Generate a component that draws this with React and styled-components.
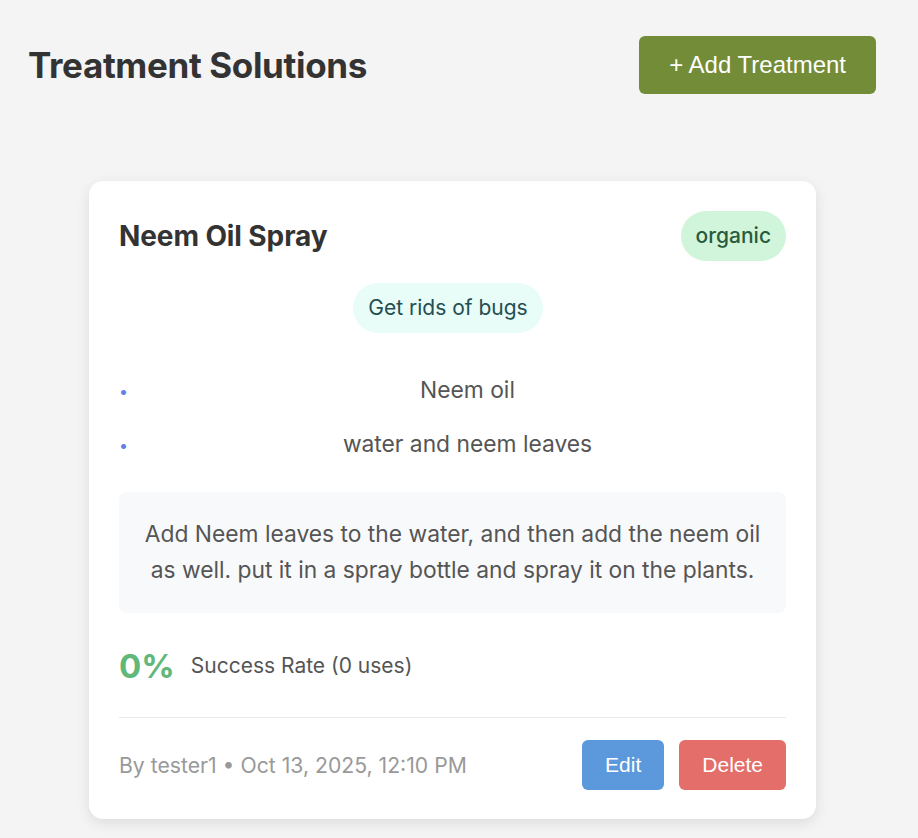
import React from "react";
import styled, { createGlobalStyle } from "styled-components";

const Global = createGlobalStyle`
  html, body { margin: 0; padding: 0; background: #f4f4f4; }
  body { font-family: Inter, "Noto Sans", sans-serif; color: #333; }
  * { box-sizing: border-box; }
`;

const Page = styled.div`
  padding: 36px 42px 40px 28px;
`;

const Header = styled.header`
  display: flex;
  align-items: center;
  justify-content: space-between;
`;

const Title = styled.h1`
  margin: 0;
  font-family: Inter, sans-serif;
  font-weight: 700;
  font-size: 35px;
  color: #333;
  letter-spacing: -0.35px;
`;

const Button = styled.button`
  border: none;
  cursor: pointer;
  font-family: "Liberation Sans", Arial, sans-serif;
  color: #fff;
  border-radius: 6px;
  font-size: ${(p) => p.$size || 21}px;
  padding: ${(p) => p.$pad || "13px 23px"};
  background: ${(p) => p.$bg};
  line-height: 1.15;
`;

const Grid = styled.section`
  display: grid;
  grid-template-columns: 727px;
  margin-top: 87px;
  padding-left: 61px;
`;

const Card = styled.article`
  background: #fff;
  border-radius: 14px;
  box-shadow: 0 4px 14px rgba(0, 0, 0, 0.1);
  padding: 30px 30px 29px;
  text-align: center;
`;

const CardHead = styled.div`
  display: flex;
  align-items: center;
  justify-content: space-between;
`;

const CardTitle = styled.h2`
  margin: 0;
  font-size: 28px;
  font-weight: 700;
  color: #333;
  letter-spacing: -0.1px;
`;

const Pill = styled.span`
  display: inline-block;
  font-size: 21px;
  font-weight: ${(p) => p.$weight || 400};
  padding: 12px 15px;
  border-radius: 999px;
  line-height: 26px;
  background: ${(p) => p.$bg};
  color: ${(p) => p.$color};
`;

const PillRow = styled.div`
  margin-top: 22px;
  padding-right: 9px;
`;

const List = styled.ul`
  list-style: none;
  margin: 30px 0 0;
  padding: 0;
`;

const Item = styled.li`
  position: relative;
  padding: 9px 0 9px 30px;
  font-size: 22.8px;
  line-height: 36px;
  color: #555;
  &::before {
    content: "•";
    position: absolute;
    left: 0;
    top: 10px;
    color: #667eea;
    font-size: 16px;
  }
`;

const Instructions = styled.p`
  margin: 21px 0 0;
  background: #f8f9fa;
  border-radius: 8px;
  padding: 24px 22px 25px;
  font-size: 22.8px;
  line-height: 36px;
  color: #555;
`;

const Stats = styled.div`
  display: flex;
  align-items: center;
  gap: 16px;
  margin-top: 33px;
  text-align: left;
`;

const Rate = styled.span`
  font-size: 33px;
  font-weight: 700;
  color: #62b77a;
  line-height: 40px;
`;

const RateLabel = styled.span`
  font-size: 21px;
  color: #555;
`;

const Footer = styled.div`
  display: flex;
  align-items: center;
  justify-content: space-between;
  border-top: 1px solid #e8e8e8;
  margin-top: 31px;
  padding-top: 22px;
`;

const Meta = styled.span`
  font-size: 21.2px;
  color: #999;
`;

const Actions = styled.div`
  display: flex;
  gap: 15px;
`;

export default function App() {
  return (
    <>
      <Global />
      <Page>
        <Header>
          <Title>Treatment Solutions</Title>
          <Button $bg="#738c38" $size={24} $pad="15px 30px">
            + Add Treatment
          </Button>
        </Header>
        <Grid>
          <Card>
            <CardHead>
              <CardTitle>Neem Oil Spray</CardTitle>
              <Pill $bg="#d0f5da" $color="#2a5a3c" $weight={500}>
                organic
              </Pill>
            </CardHead>
            <PillRow>
              <Pill $bg="#e8fcf8" $color="#234e52">
                Get rids of bugs
              </Pill>
            </PillRow>
            <List>
              <Item>Neem oil</Item>
              <Item>water and neem leaves</Item>
            </List>
            <Instructions>
              Add Neem leaves to the water, and then add the neem oil as well.
              put it in a spray bottle and spray it on the plants.
            </Instructions>
            <Stats>
              <Rate>0%</Rate>
              <RateLabel>Success Rate (0 uses)</RateLabel>
            </Stats>
            <Footer>
              <Meta>By tester1 • Oct 13, 2025, 12:10 PM</Meta>
              <Actions>
                <Button $bg="#5b98dc">Edit</Button>
                <Button $bg="#e36e6a">Delete</Button>
              </Actions>
            </Footer>
          </Card>
        </Grid>
      </Page>
    </>
  );
}
